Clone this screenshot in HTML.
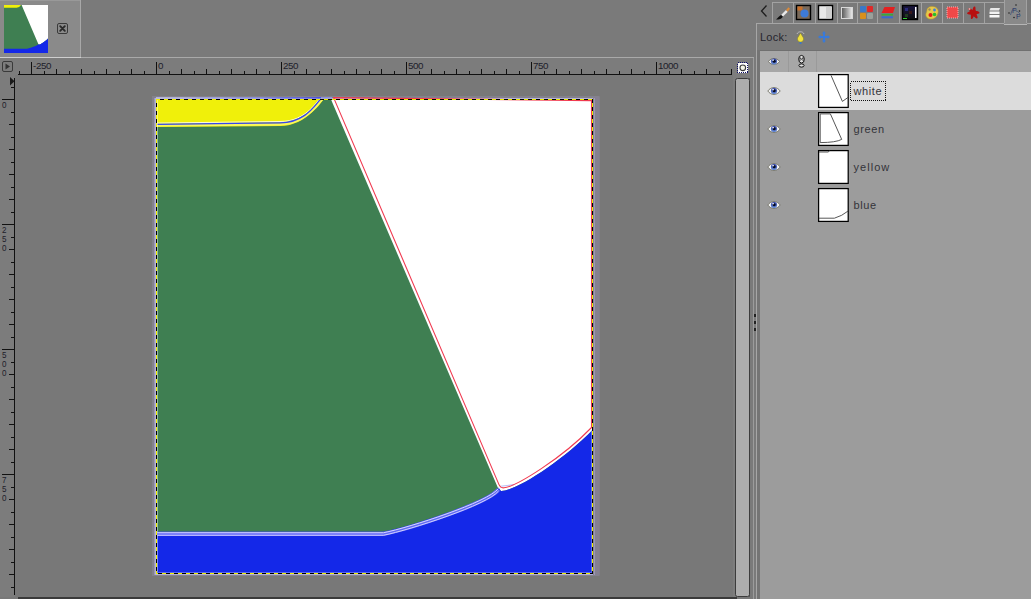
<!DOCTYPE html><html><head><meta charset="utf-8"><style>html,body{margin:0;padding:0;width:1031px;height:599px;overflow:hidden;background:#787878;font-family:"Liberation Sans",sans-serif;}svg{display:block;position:absolute;left:0;top:0}</style></head><body>
<svg width="1031" height="599" viewBox="0 0 1031 599">
<rect x="0" y="0" width="754" height="599" fill="#787878"/>
<rect x="0" y="0" width="754" height="57" fill="#7a7a7a"/>
<rect x="0" y="0" width="80" height="57" fill="#8a8a8a"/>
<rect x="80" y="0" width="1" height="58" fill="#a8a8a8"/>
<rect x="0" y="57" width="754" height="1" fill="#a9a9a9"/>
<rect x="0" y="57" width="81" height="2" fill="#cfcfcf"/>
<g transform="translate(4,5) scale(0.10069,0.10105) translate(-156,-99)"><rect x="156" y="99" width="437" height="475" fill="#3f7f52"/><path d="M156 99 H324 C 323 99.9, 306.4 126.3, 280 126 L156 127 Z" fill="#f0f00a"/><path d="M330.8 99 H593 V429.5 C 562.36 461.2, 515 491.6, 501 490.9 Q 498.5 490.5, 497.8 487.5 Z" fill="#ffffff"/><path d="M156 531.75 H383.5 C 409.82 526.48, 488.29 501.12, 498.5 487.5 L 501 490.9 C 515 491.6, 562.36 461.2, 593 429.5 V574 H156 Z" fill="#1428e8"/></g>
<rect x="57.5" y="23.5" width="10" height="10" rx="1.5" fill="none" stroke="#3a3a3a" stroke-width="1"/>
<path d="M60.2 26.2 L64.8 30.8 M64.8 26.2 L60.2 30.8" stroke="#2a2a2a" stroke-width="1.9" stroke-linecap="round"/>
<rect x="0" y="0" width="80" height="1" fill="#999999"/>
<rect x="0" y="58" width="733" height="17" fill="#7c7c7c"/>
<rect x="0" y="58" width="15" height="539" fill="#7c7c7c"/>
<rect x="2.5" y="61.5" width="10" height="10" rx="1.5" fill="none" stroke="#3a3a3a"/>
<path d="M5.5 63.5 L10 66.5 L5.5 69.5 Z" fill="#333"/>
<rect x="18" y="74" width="714" height="1" fill="#111"/>
<rect x="14" y="78" width="1" height="517" fill="#111"/>
<rect x="19" y="71" width="1" height="3" fill="#111"/>
<rect x="31" y="62" width="1" height="12" fill="#111"/>
<rect x="44" y="71" width="1" height="3" fill="#111"/>
<rect x="56" y="69" width="1" height="5" fill="#111"/>
<rect x="69" y="71" width="1" height="3" fill="#111"/>
<rect x="81" y="69" width="1" height="5" fill="#111"/>
<rect x="94" y="71" width="1" height="3" fill="#111"/>
<rect x="106" y="69" width="1" height="5" fill="#111"/>
<rect x="119" y="71" width="1" height="3" fill="#111"/>
<rect x="131" y="69" width="1" height="5" fill="#111"/>
<rect x="144" y="71" width="1" height="3" fill="#111"/>
<rect x="156" y="62" width="1" height="12" fill="#111"/>
<rect x="169" y="71" width="1" height="3" fill="#111"/>
<rect x="181" y="69" width="1" height="5" fill="#111"/>
<rect x="194" y="71" width="1" height="3" fill="#111"/>
<rect x="206" y="69" width="1" height="5" fill="#111"/>
<rect x="219" y="71" width="1" height="3" fill="#111"/>
<rect x="231" y="69" width="1" height="5" fill="#111"/>
<rect x="244" y="71" width="1" height="3" fill="#111"/>
<rect x="256" y="69" width="1" height="5" fill="#111"/>
<rect x="269" y="71" width="1" height="3" fill="#111"/>
<rect x="281" y="62" width="1" height="12" fill="#111"/>
<rect x="294" y="71" width="1" height="3" fill="#111"/>
<rect x="306" y="69" width="1" height="5" fill="#111"/>
<rect x="319" y="71" width="1" height="3" fill="#111"/>
<rect x="331" y="69" width="1" height="5" fill="#111"/>
<rect x="344" y="71" width="1" height="3" fill="#111"/>
<rect x="356" y="69" width="1" height="5" fill="#111"/>
<rect x="369" y="71" width="1" height="3" fill="#111"/>
<rect x="381" y="69" width="1" height="5" fill="#111"/>
<rect x="394" y="71" width="1" height="3" fill="#111"/>
<rect x="406" y="62" width="1" height="12" fill="#111"/>
<rect x="419" y="71" width="1" height="3" fill="#111"/>
<rect x="431" y="69" width="1" height="5" fill="#111"/>
<rect x="444" y="71" width="1" height="3" fill="#111"/>
<rect x="456" y="69" width="1" height="5" fill="#111"/>
<rect x="469" y="71" width="1" height="3" fill="#111"/>
<rect x="481" y="69" width="1" height="5" fill="#111"/>
<rect x="494" y="71" width="1" height="3" fill="#111"/>
<rect x="506" y="69" width="1" height="5" fill="#111"/>
<rect x="519" y="71" width="1" height="3" fill="#111"/>
<rect x="531" y="62" width="1" height="12" fill="#111"/>
<rect x="544" y="71" width="1" height="3" fill="#111"/>
<rect x="556" y="69" width="1" height="5" fill="#111"/>
<rect x="569" y="71" width="1" height="3" fill="#111"/>
<rect x="581" y="69" width="1" height="5" fill="#111"/>
<rect x="594" y="71" width="1" height="3" fill="#111"/>
<rect x="606" y="69" width="1" height="5" fill="#111"/>
<rect x="619" y="71" width="1" height="3" fill="#111"/>
<rect x="631" y="69" width="1" height="5" fill="#111"/>
<rect x="644" y="71" width="1" height="3" fill="#111"/>
<rect x="656" y="62" width="1" height="12" fill="#111"/>
<rect x="669" y="71" width="1" height="3" fill="#111"/>
<rect x="681" y="69" width="1" height="5" fill="#111"/>
<rect x="694" y="71" width="1" height="3" fill="#111"/>
<rect x="706" y="69" width="1" height="5" fill="#111"/>
<rect x="719" y="71" width="1" height="3" fill="#111"/>
<rect x="731" y="69" width="1" height="5" fill="#111"/>
<rect x="11" y="87" width="3" height="1" fill="#111"/>
<rect x="2" y="99" width="12" height="1" fill="#111"/>
<rect x="11" y="112" width="3" height="1" fill="#111"/>
<rect x="9" y="124" width="5" height="1" fill="#111"/>
<rect x="11" y="137" width="3" height="1" fill="#111"/>
<rect x="9" y="149" width="5" height="1" fill="#111"/>
<rect x="11" y="162" width="3" height="1" fill="#111"/>
<rect x="9" y="174" width="5" height="1" fill="#111"/>
<rect x="11" y="187" width="3" height="1" fill="#111"/>
<rect x="9" y="199" width="5" height="1" fill="#111"/>
<rect x="11" y="212" width="3" height="1" fill="#111"/>
<rect x="2" y="224" width="12" height="1" fill="#111"/>
<rect x="11" y="237" width="3" height="1" fill="#111"/>
<rect x="9" y="249" width="5" height="1" fill="#111"/>
<rect x="11" y="262" width="3" height="1" fill="#111"/>
<rect x="9" y="274" width="5" height="1" fill="#111"/>
<rect x="11" y="287" width="3" height="1" fill="#111"/>
<rect x="9" y="299" width="5" height="1" fill="#111"/>
<rect x="11" y="312" width="3" height="1" fill="#111"/>
<rect x="9" y="324" width="5" height="1" fill="#111"/>
<rect x="11" y="337" width="3" height="1" fill="#111"/>
<rect x="2" y="349" width="12" height="1" fill="#111"/>
<rect x="11" y="362" width="3" height="1" fill="#111"/>
<rect x="9" y="374" width="5" height="1" fill="#111"/>
<rect x="11" y="387" width="3" height="1" fill="#111"/>
<rect x="9" y="399" width="5" height="1" fill="#111"/>
<rect x="11" y="412" width="3" height="1" fill="#111"/>
<rect x="9" y="424" width="5" height="1" fill="#111"/>
<rect x="11" y="437" width="3" height="1" fill="#111"/>
<rect x="9" y="449" width="5" height="1" fill="#111"/>
<rect x="11" y="462" width="3" height="1" fill="#111"/>
<rect x="2" y="474" width="12" height="1" fill="#111"/>
<rect x="11" y="487" width="3" height="1" fill="#111"/>
<rect x="9" y="499" width="5" height="1" fill="#111"/>
<rect x="11" y="512" width="3" height="1" fill="#111"/>
<rect x="9" y="524" width="5" height="1" fill="#111"/>
<rect x="11" y="537" width="3" height="1" fill="#111"/>
<rect x="9" y="549" width="5" height="1" fill="#111"/>
<rect x="11" y="562" width="3" height="1" fill="#111"/>
<rect x="9" y="574" width="5" height="1" fill="#111"/>
<rect x="11" y="587" width="3" height="1" fill="#111"/>
<path d="M10 77 L14.5 81.2 L10 85.5 Z" fill="#1a1a1a"/>
<text x="33.1" y="68.8" font-size="9.8" letter-spacing="-0.45" fill="#20202a" font-family="Liberation Sans">-250</text>
<text x="158.1" y="68.8" font-size="9.8" letter-spacing="-0.45" fill="#20202a" font-family="Liberation Sans">0</text>
<text x="283.1" y="68.8" font-size="9.8" letter-spacing="-0.45" fill="#20202a" font-family="Liberation Sans">250</text>
<text x="408.1" y="68.8" font-size="9.8" letter-spacing="-0.45" fill="#20202a" font-family="Liberation Sans">500</text>
<text x="533.1" y="68.8" font-size="9.8" letter-spacing="-0.45" fill="#20202a" font-family="Liberation Sans">750</text>
<text x="658.1" y="68.8" font-size="9.8" letter-spacing="-0.45" fill="#20202a" font-family="Liberation Sans">1000</text>
<text transform="translate(1.9,108.1) scale(0.84,1)" font-size="9.6" fill="#20202a" font-family="Liberation Sans">0</text>
<text transform="translate(1.9,233.1) scale(0.84,1)" font-size="9.6" fill="#20202a" font-family="Liberation Sans">2</text>
<text transform="translate(1.9,242.2) scale(0.84,1)" font-size="9.6" fill="#20202a" font-family="Liberation Sans">5</text>
<text transform="translate(1.9,251.3) scale(0.84,1)" font-size="9.6" fill="#20202a" font-family="Liberation Sans">0</text>
<text transform="translate(1.9,358.1) scale(0.84,1)" font-size="9.6" fill="#20202a" font-family="Liberation Sans">5</text>
<text transform="translate(1.9,367.2) scale(0.84,1)" font-size="9.6" fill="#20202a" font-family="Liberation Sans">0</text>
<text transform="translate(1.9,376.3) scale(0.84,1)" font-size="9.6" fill="#20202a" font-family="Liberation Sans">0</text>
<text transform="translate(1.9,483.1) scale(0.84,1)" font-size="9.6" fill="#20202a" font-family="Liberation Sans">7</text>
<text transform="translate(1.9,492.2) scale(0.84,1)" font-size="9.6" fill="#20202a" font-family="Liberation Sans">5</text>
<text transform="translate(1.9,501.3) scale(0.84,1)" font-size="9.6" fill="#20202a" font-family="Liberation Sans">0</text>
<rect x="18" y="597" width="719" height="2" fill="#3a3a3a"/>
<rect x="152" y="96" width="447.5" height="480" fill="#83818d"/>
<rect x="154.5" y="98" width="440" height="477" fill="#b4b2d8"/>
<rect x="593" y="97" width="6.5" height="478" fill="#85808f"/>
<rect x="594" y="98" width="1" height="477" fill="#9c98b8"/>
<g id="img"><rect x="156" y="99" width="437" height="475" fill="#3f7f52"/><path d="M156 99 H324 C 323 99.9, 306.4 126.3, 280 126 L156 127 Z" fill="#f0f00a"/><path d="M330.8 99 H593 V429.5 C 562.36 461.2, 515 491.6, 501 490.9 Q 498.5 490.5, 497.8 487.5 Z" fill="#ffffff"/><path d="M156 531.75 H383.5 C 409.82 526.48, 488.29 501.12, 498.5 487.5 L 501 490.9 C 515 491.6, 562.36 461.2, 593 429.5 V574 H156 Z" fill="#1428e8"/></g>
<path d="M156 125.6 L280 124.4 C 307 124.5, 320 101, 322.5 99" fill="none" stroke="#f8f860" stroke-width="2"/>
<g transform="translate(0,-1.3)"><path d="M156 124.4 L280 122.8 C 307.5 122.8, 317.5 100.5, 321 99.2" fill="none" stroke="#ffffff" stroke-width="1" opacity="0.85"/></g>
<path d="M156 124.4 L280 122.8 C 307.5 122.8, 317.5 100.5, 321 99.2" fill="none" stroke="#3444f2" stroke-width="1.3"/>
<defs><linearGradient id="tl" x1="0" x2="1" y1="0" y2="0"><stop offset="0" stop-color="#c4c4e4"/><stop offset="0.6" stop-color="#8a90e8"/><stop offset="1" stop-color="#4048ee"/></linearGradient></defs>
<rect x="156" y="97.2" width="165" height="1.3" fill="url(#tl)"/>
<rect x="157" y="100" width="1" height="473" fill="#ffffff" opacity="0.45"/>
<rect x="321" y="97" width="11" height="1.4" fill="#8a90d8"/>
<g transform="translate(0,2.1)"><path d="M156 531.75 H383.5 C 409.82 526.48, 488.29 501.12, 498.5 487.5" fill="none" stroke="#6068f6" stroke-width="4.2"/></g>
<g transform="translate(0,1.0)"><path d="M156 531.75 H383.5 C 409.82 526.48, 488.29 501.12, 498.5 487.5" fill="none" stroke="#d8d8ff" stroke-width="1.0"/></g>
<g transform="translate(0,3.5)"><path d="M156 531.75 H383.5 C 409.82 526.48, 488.29 501.12, 498.5 487.5" fill="none" stroke="#d0d0ff" stroke-width="1.0"/></g>
<rect x="157" y="572" width="434.5" height="1" fill="#5a68f4"/>
<rect x="591" y="431" width="1" height="142" fill="#5a68f4"/>
<path d="M501 486.2 Q 508 485.5 514 484.5" fill="none" stroke="#8088f0" stroke-width="0.8" opacity="0.7"/>
<path d="M333.6 97.6 L499 484.6 Q 500.6 488.3 504 487.8 C 516 486.6, 562.36 458, 591.5 427.5 V100.6 Z" fill="none" stroke="#f03a50" stroke-width="1.1"/>
<path d="M156.5 99 V574 M592.5 99 V574 M156 99.5 H593 M156 573.5 H593" fill="none" stroke="#f0f000" stroke-width="1"/>
<path d="M156.5 99 V574 M156 99.5 H593" fill="none" stroke="#000" stroke-width="1" stroke-dasharray="4 4" stroke-dashoffset="4"/>
<path d="M592.5 99 V574" fill="none" stroke="#000" stroke-width="1" stroke-dasharray="4 4" stroke-dashoffset="0"/>
<path d="M156 573.5 H593" fill="none" stroke="#000" stroke-width="1" stroke-dasharray="4 4" stroke-dashoffset="6"/>
<rect x="733" y="58" width="20" height="539" fill="#7d7d7d"/>
<rect x="750" y="0" width="10" height="599" fill="#7a7a7a"/>
<rect x="749" y="78" width="1" height="519" fill="#555"/>
<rect x="753" y="57" width="1" height="542" fill="#9c9c9c"/>
<rect x="750" y="57" width="4" height="1" fill="#a9a9a9"/>
<rect x="757" y="50" width="3" height="549" fill="#747474"/>
<rect x="754" y="314" width="2" height="3" fill="#222"/>
<rect x="754" y="321" width="2" height="3" fill="#222"/>
<rect x="754" y="328" width="2" height="3" fill="#222"/>
<rect x="738" y="63" width="10" height="10" fill="#fff"/>
<g shape-rendering="crispEdges"><rect x="737.5" y="62.5" width="10" height="10" fill="none" stroke="#10106a" stroke-dasharray="1 1"/></g>
<circle cx="742.8" cy="67.8" r="2.8" fill="#f4f4e8" stroke="#3a3a3a" stroke-width="1.1"/>
<rect x="735.5" y="78.5" width="14" height="518" rx="2" fill="#adadad" stroke="#3c3c3c"/>
<rect x="760" y="0" width="271" height="599" fill="#9c9c9c"/>
<rect x="756" y="0" width="275" height="50" fill="#7a7a7a"/>
<path d="M766.5 5.5 L761.5 11 L766.5 16.5" fill="none" stroke="#1e1e1e" stroke-width="1.3"/>
<rect x="772" y="2" width="233" height="1" fill="#a2a2a2"/>
<rect x="756" y="23" width="275" height="1" fill="#a6a6a6"/>
<rect x="1004" y="0" width="23" height="25" fill="#898989"/>
<rect x="1004" y="24" width="23" height="1" fill="#b5b5b5"/>
<rect x="772.0" y="2" width="1" height="21" fill="#a2a2a2"/>
<rect x="793.0" y="2" width="1" height="21" fill="#a2a2a2"/>
<rect x="815.0" y="2" width="1" height="21" fill="#a2a2a2"/>
<rect x="837.0" y="2" width="1" height="21" fill="#a2a2a2"/>
<rect x="857.0" y="2" width="1" height="21" fill="#a2a2a2"/>
<rect x="877.0" y="2" width="1" height="21" fill="#a2a2a2"/>
<rect x="899.0" y="2" width="1" height="21" fill="#a2a2a2"/>
<rect x="921.0" y="2" width="1" height="21" fill="#a2a2a2"/>
<rect x="942.0" y="2" width="1" height="21" fill="#a2a2a2"/>
<rect x="963.0" y="2" width="1" height="21" fill="#a2a2a2"/>
<rect x="984.0" y="2" width="1" height="21" fill="#a2a2a2"/>
<rect x="1004.0" y="0" width="1" height="23" fill="#a2a2a2"/>
<rect x="1026.0" y="0" width="1" height="23" fill="#a2a2a2"/>
<rect x="756" y="23" width="1" height="576" fill="#a6a6a6"/>
<path d="M776 19.5 C778 18 779 16 781 15 L783 16.5 C782 19 779 19.5 776 19.5 Z" fill="#111"/>
<path d="M781.3 14.8 L786 10 L787.8 11.8 L783 16.6 Z" fill="#e8e8e8"/>
<path d="M786 10 L788.5 7.2 L790 8.8 L787.8 11.8 Z" fill="#d98a3a"/>
<rect x="796.5" y="5.5" width="14" height="14" fill="#7a6a5a" stroke="#000" stroke-width="1.4"/>
<rect x="797.5" y="6.5" width="5" height="4" fill="#c8702a"/>
<circle cx="804.5" cy="13.5" r="4" fill="#3d7ad8"/>
<rect x="818.5" y="5.5" width="14" height="14" fill="#e8e8e8" stroke="#000" stroke-width="1.4"/>
<rect x="826" y="7" width="6" height="11" fill="#cfcfcf"/>
<defs><linearGradient id="g4" x1="0" x2="1" y1="0" y2="0"><stop offset="0" stop-color="#555"/><stop offset="1" stop-color="#eee"/></linearGradient><linearGradient id="g7" x1="0" x2="0" y1="0" y2="1"><stop offset="0" stop-color="#1a1540"/><stop offset="1" stop-color="#101010"/></linearGradient></defs>
<rect x="841.5" y="7.5" width="11" height="11" fill="url(#g4)" stroke="#d8d8d8" stroke-width="1"/>
<rect x="860" y="6" width="6" height="6" rx="1" fill="#3a78c8"/>
<rect x="867" y="6" width="6" height="6" rx="1" fill="#e02828"/>
<rect x="860" y="13" width="6" height="6" rx="1" fill="#d8901c"/>
<rect x="867" y="13" width="6" height="6" rx="1" fill="#9aa09a"/>
<path d="M881.5 16.3 H893 V18.3 H881.5 Z" fill="#3a68d0"/>
<path d="M881.5 13.8 H893 V15.6 H881.5 Z" fill="#3aa83a"/>
<path d="M884.5 7 H895 L893 13 H881.5 Z" fill="#e42020"/>
<rect x="902.5" y="5.5" width="15" height="14" fill="url(#g7)" stroke="#000" stroke-width="1.4"/>
<rect x="905" y="8" width="3" height="3" fill="#2a2a7a"/><rect x="909" y="11" width="3" height="3" fill="#3a1a1a"/><rect x="905" y="14" width="3" height="3" fill="#203a20"/>
<rect x="915" y="7" width="1.5" height="11" fill="#fff"/>
<rect x="903" y="18" width="4" height="1" fill="#3c3"/>
<path d="M931 6.5 C936 6 939 9 938 13 C937 17 934 19.5 930 19 C926 18.5 925 15 926.5 12 C927.5 10 926 8 931 6.5 Z" fill="#e8c84a" stroke="#b89a30" stroke-width="0.6"/>
<circle cx="930.5" cy="15" r="2" fill="#e01818"/><circle cx="934.5" cy="14.5" r="1.8" fill="#2ac02a"/><circle cx="934.5" cy="10" r="1.4" fill="#3a80e0"/><circle cx="929.5" cy="9.5" r="1.2" fill="#9a8a5a"/>
<rect x="947" y="7" width="11" height="11" fill="#f04848" stroke="#ffb0b0" stroke-width="1" stroke-dasharray="1 1"/>
<path d="M968.5 8.5 C970 7.5 971.5 9 972.5 10 C973 8 973.5 6 975 6.5 C976 7.5 975 10 976 11 C977.5 11 979.5 11.5 979.5 13 C979 14 977 13.5 976.5 14.5 C977 16 978.5 17.5 977 18.5 C975.5 18.5 974.5 16.5 973.5 16.5 C973 18 972.5 19.5 971 19 C970.5 17.5 971.5 15.5 970.5 14.5 C969 14.5 967 14.5 967 13 C967.5 12 969.5 12 970 11 C969.5 10.5 968 9.5 968.5 8.5 Z" fill="#b81010"/>
<circle cx="969.5" cy="9" r="1" fill="#e8a0a0"/>
<path d="M990.5 8 H1000 L999 10.5 H989.5 Z" fill="#e8e8e8"/><path d="M989.5 11.5 H999.5 V14 H989.5 Z" fill="#f2f2f2"/><path d="M989.5 15 H999.5 V17.5 H989.5 Z" fill="#f8f8f8"/>
<path d="M1010.5 15 C1012 10 1013 8 1015 9 M1016 11 C1018 11 1019 13 1020 14" fill="none" stroke="#4a5a7a" stroke-width="0.9"/>
<text x="1012" y="13" font-size="7" fill="#2a3a6a" font-family="Liberation Sans">P</text><text x="1016" y="19" font-size="7" fill="#2a3a6a" font-family="Liberation Sans">P</text>
<circle cx="1016" cy="5" r="0.8" fill="#222"/><circle cx="1009" cy="13" r="0.8" fill="#222"/><circle cx="1014" cy="17.5" r="0.8" fill="#222"/><circle cx="1019.5" cy="11" r="0.8" fill="#222"/>
<text x="760" y="40.8" font-size="11" letter-spacing="0.25" fill="#26262e" font-family="Liberation Sans">Lock:</text>
<path d="M797 34 C798 31 803 31 804 34" fill="none" stroke="#bbb" stroke-width="1"/>
<path d="M800.5 33 L803.5 38 C804 41 802 42 800.5 42 C799 42 797 41 797.5 38 Z" fill="#f0e040" stroke="#7a7a20" stroke-width="0.5"/>
<rect x="799.5" y="42" width="2" height="2" fill="#3a78c8"/>
<path d="M824 31 L826 33.5 H825 V36 H827.5 V35 L830 37 L827.5 39 V38 H825 V40.5 H826 L824 43 L822 40.5 H823 V38 H820.5 V39 L818 37 L820.5 35 V36 H823 V33.5 H822 Z" fill="#3a7ad8"/>
<rect x="760" y="50" width="271" height="1" fill="#707070"/>
<rect x="760" y="51" width="271" height="21" fill="#a7a7a7"/>
<rect x="788" y="51" width="1" height="21" fill="#9a9a9a"/>
<rect x="816" y="51" width="1" height="21" fill="#9a9a9a"/>
<defs><linearGradient id="iris" x1="0" x2="0" y1="0" y2="1"><stop offset="0" stop-color="#2a3aa0"/><stop offset="1" stop-color="#6a90d8"/></linearGradient></defs>
<path d="M768.5 61.5 C771 57.5 777 57.5 779.5 61.5 C777 65.5 771 65.5 768.5 61.5 Z" fill="#f2f2f2" stroke="#6e6e62" stroke-width="0.9"/>
<circle cx="774" cy="61.5" r="3.1" fill="url(#iris)"/><circle cx="774.2" cy="61.3" r="1.5" fill="#050a20"/><rect x="772.4" y="59.4" width="1.4" height="1.4" fill="#fff"/>
<ellipse cx="801.5" cy="59.2" rx="2.8" ry="3.8" fill="#e0e0e0" stroke="#111" stroke-width="1"/>
<path d="M800 61 V57.5 L801.5 59.5 L803 57.5 V61" fill="none" stroke="#111" stroke-width="0.7"/>
<ellipse cx="801.5" cy="65.5" rx="2.6" ry="1.6" fill="#e0e0e0" stroke="#111" stroke-width="1"/>
<rect x="760" y="72" width="271" height="38" fill="#dcdcdc"/>
<path d="M767.8 91 C771 86.4 777 86.4 780.2 91 C777 95.6 771 95.6 767.8 91 Z" fill="#f2f2f2" stroke="#6e6e62" stroke-width="0.9"/>
<circle cx="774" cy="91" r="3.1" fill="url(#iris)"/><circle cx="774.2" cy="90.8" r="1.5" fill="#050a20"/><rect x="772.4" y="88.9" width="1.4" height="1.4" fill="#fff"/>
<rect x="818.6" y="74.6" width="29.6" height="32.8" fill="#fff" stroke="#000" stroke-width="1.25"/>
<text x="853.5" y="95" font-size="11" letter-spacing="0.6" fill="#34343a" font-family="Liberation Sans">white</text>
<path d="M767.8 129 C771 124.4 777 124.4 780.2 129 C777 133.6 771 133.6 767.8 129 Z" fill="#f2f2f2" stroke="#6e6e62" stroke-width="0.9"/>
<circle cx="774" cy="129" r="3.1" fill="url(#iris)"/><circle cx="774.2" cy="128.8" r="1.5" fill="#050a20"/><rect x="772.4" y="126.9" width="1.4" height="1.4" fill="#fff"/>
<rect x="818.6" y="112.6" width="29.6" height="32.8" fill="#fff" stroke="#000" stroke-width="1.25"/>
<text x="853.5" y="133" font-size="11" letter-spacing="0.6" fill="#34343a" font-family="Liberation Sans">green</text>
<path d="M767.8 167 C771 162.4 777 162.4 780.2 167 C777 171.6 771 171.6 767.8 167 Z" fill="#f2f2f2" stroke="#6e6e62" stroke-width="0.9"/>
<circle cx="774" cy="167" r="3.1" fill="url(#iris)"/><circle cx="774.2" cy="166.8" r="1.5" fill="#050a20"/><rect x="772.4" y="164.9" width="1.4" height="1.4" fill="#fff"/>
<rect x="818.6" y="150.6" width="29.6" height="32.8" fill="#fff" stroke="#000" stroke-width="1.25"/>
<text x="853.5" y="171" font-size="11" letter-spacing="1.05" fill="#34343a" font-family="Liberation Sans">yellow</text>
<path d="M767.8 205 C771 200.4 777 200.4 780.2 205 C777 209.6 771 209.6 767.8 205 Z" fill="#f2f2f2" stroke="#6e6e62" stroke-width="0.9"/>
<circle cx="774" cy="205" r="3.1" fill="url(#iris)"/><circle cx="774.2" cy="204.8" r="1.5" fill="#050a20"/><rect x="772.4" y="202.9" width="1.4" height="1.4" fill="#fff"/>
<rect x="818.6" y="188.6" width="29.6" height="32.8" fill="#fff" stroke="#000" stroke-width="1.25"/>
<text x="853.5" y="209" font-size="11" letter-spacing="0.6" fill="#34343a" font-family="Liberation Sans">blue</text>
<path d="M831 75.3 L842.4 101.4 L848.1 97.4" fill="none" stroke="#444" stroke-width="0.9"/>
<path d="M820.2 142.6 V113.9 H830.4 L841.7 139.4 Q 836 142.5 820.2 142.6" fill="none" stroke="#444" stroke-width="0.9"/>
<path d="M819 152 H828.4 L829.4 150.6" fill="none" stroke="#444" stroke-width="0.9"/>
<path d="M819 218.2 H834.4 Q 842 216 848.1 211" fill="none" stroke="#444" stroke-width="0.9"/>
<g shape-rendering="crispEdges"><rect x="850.5" y="81.5" width="35" height="19" fill="none" stroke="#111" stroke-width="1" stroke-dasharray="1 1"/></g>
</svg></body></html>
